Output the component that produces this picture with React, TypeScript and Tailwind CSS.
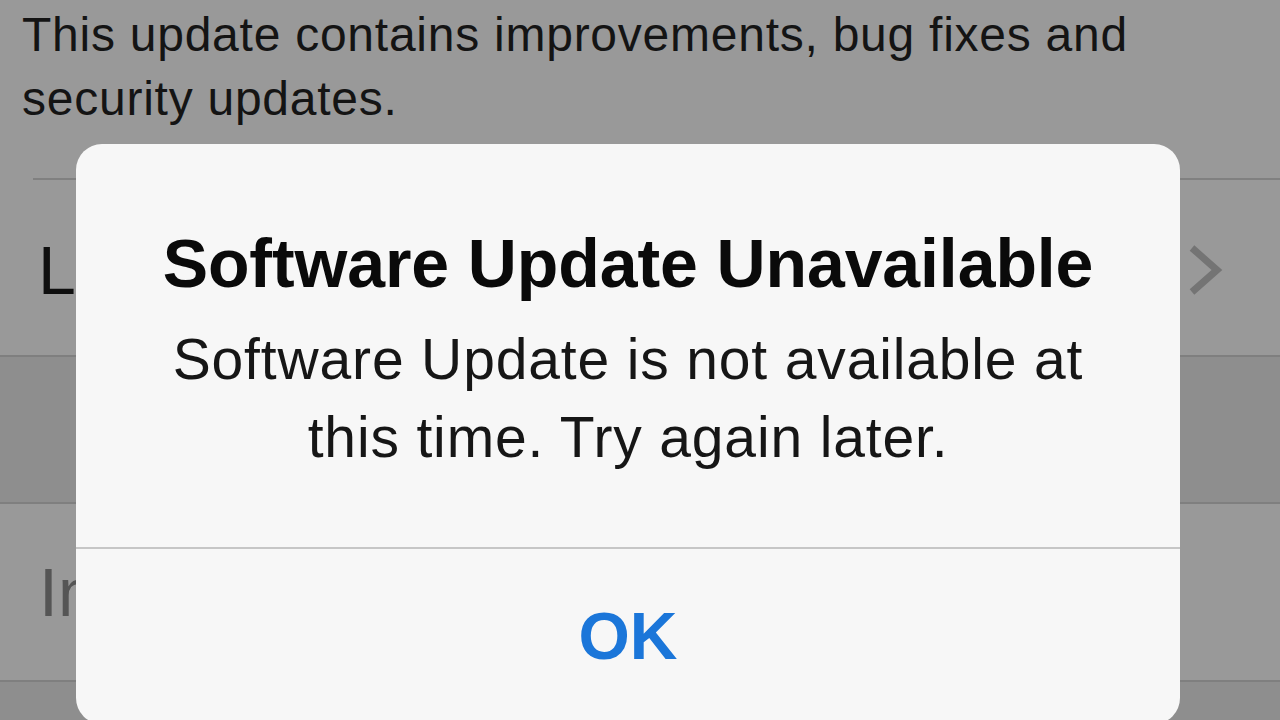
import React from 'react';

function Chevron() {
  return (
    <svg width="36" height="52" viewBox="0 0 36 52" className="shrink-0">
      <polyline points="5,4 30,26 5,48" fill="none" stroke="#747474" strokeWidth="7" />
    </svg>
  );
}

export default function App() {
  return (
    <div className="relative w-[1280px] h-[720px] overflow-hidden bg-[#8e8e8e] font-['Liberation_Sans',Arial,sans-serif]">
      {/* Settings list, dimmed behind the alert */}
      <div className="bg-[#999999] border-b-2 border-[#7f7f7f]">
        <p className="h-[178px] pt-[3px] pl-[22px] pr-[40px] text-[48px] leading-[64px] tracking-[0.75px] text-[#141414]">
          This update contains improvements, bug fixes and security updates.
        </p>
        <div className="pl-[33px]">
          <div className="flex items-center h-[177px] pt-[4px] pl-[5px] pr-[57px] border-t-2 border-[#808080]">
            <span className="text-[68px] leading-none text-[#0f0f0f]">Learn More</span>
            <div className="ml-auto">
              <Chevron />
            </div>
          </div>
        </div>
      </div>

      <div className="h-[145px]" />

      <div className="flex items-center h-[180px] pl-[39px] bg-[#999999] border-y-2 border-[#7f7f7f]">
        <span className="text-[68px] leading-none text-[#555555]">Install Now</span>
      </div>

      {/* Alert */}
      <div className="absolute left-[76px] top-[144px] w-[1104px] h-[580px] rounded-[26px] bg-[#f7f7f7] flex flex-col">
        <h2 className="pt-[79px] text-center text-[68px] leading-[80px] font-bold tracking-[-0.1px] text-[#0a0a0a]">
          Software Update Unavailable
        </h2>
        <p className="mt-[17px] px-[72px] text-center text-[57px] leading-[78px] tracking-[0.85px] text-[#161616]">
          Software Update is not available at this time. Try again later.
        </p>
        <div className="mt-[71px] h-[2px] bg-[#c6c6c6]" />
        <button className="pt-[54px] text-center text-[66px] leading-none font-bold text-[#1b76d9]">
          OK
        </button>
      </div>
    </div>
  );
}
